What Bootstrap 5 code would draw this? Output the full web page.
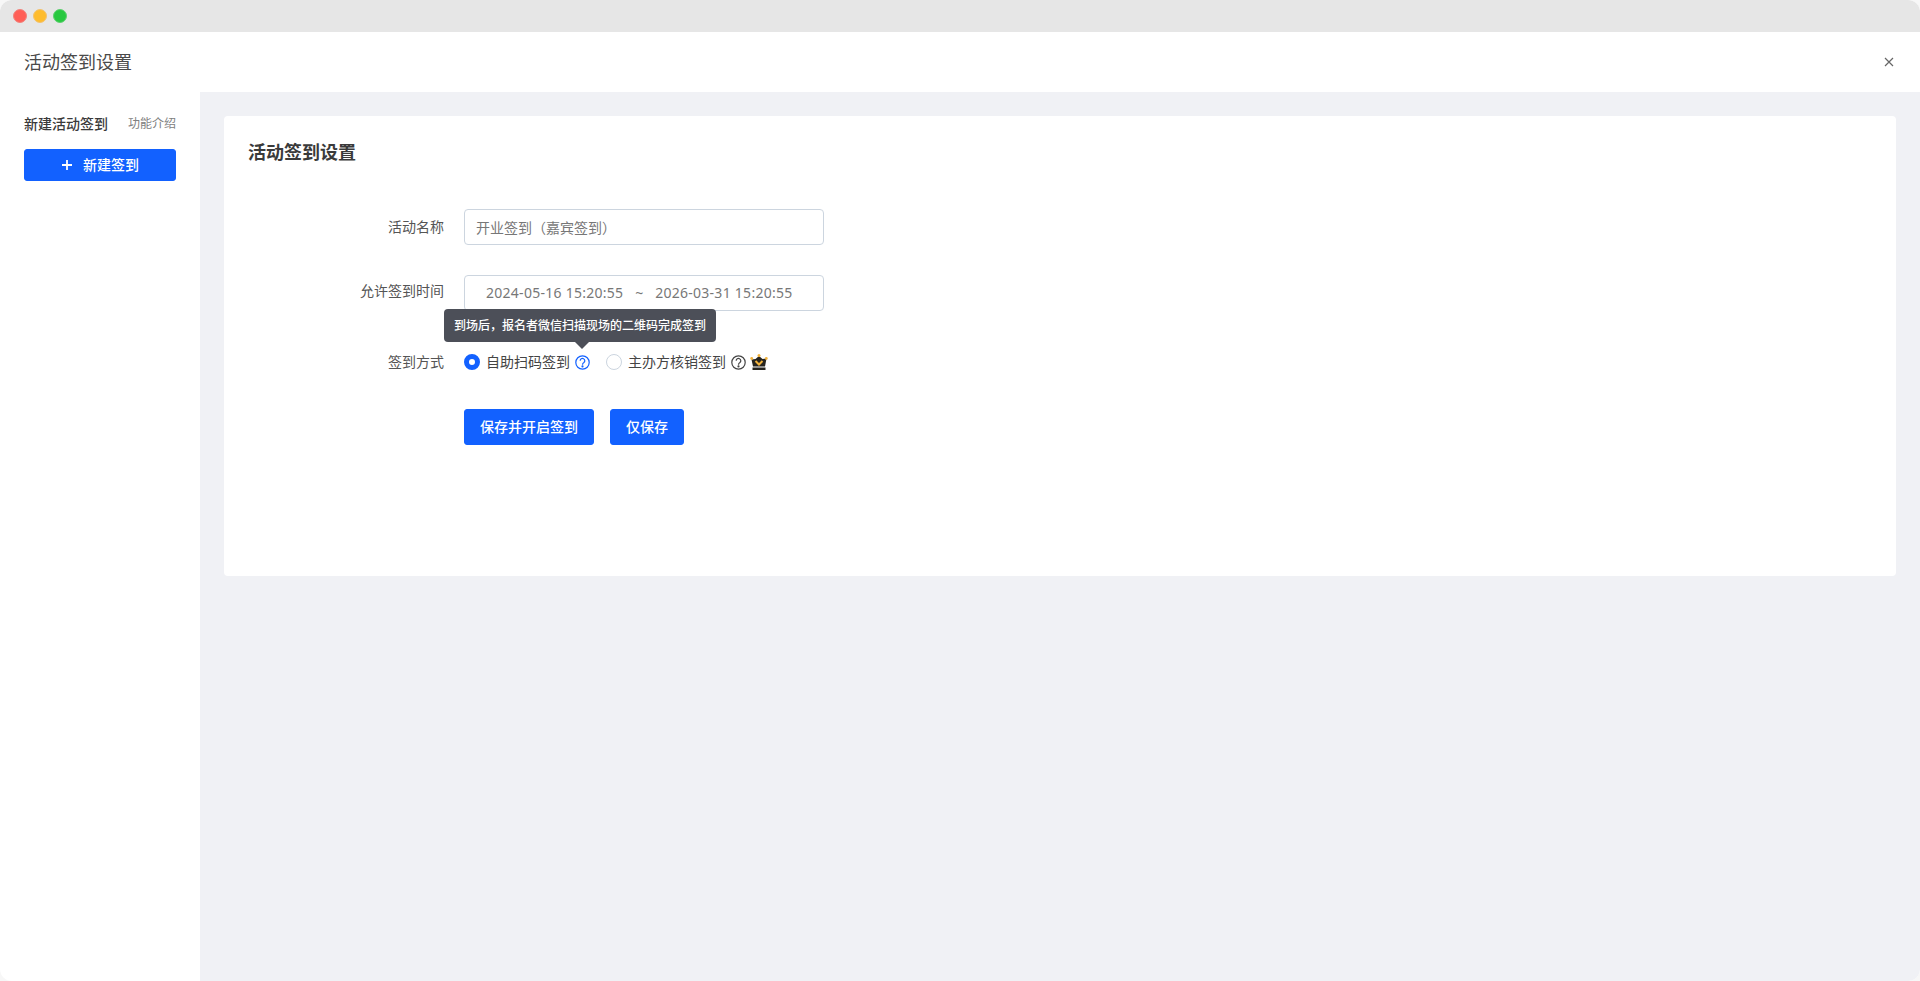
<!DOCTYPE html>
<html lang="zh-CN">
<head>
<meta charset="utf-8">
<title>活动签到设置</title>
<link href="https://cdn.jsdelivr.net/npm/bootstrap@5.3.0/dist/css/bootstrap.min.css" rel="stylesheet">
<style>
html,body{height:100%;}
body{margin:0;background:#f7f7f7;font-family:"Noto Sans","Noto Sans CJK SC",sans-serif;color:#333;font-size:14px;overflow:hidden;}
.win{height:981px;border-radius:12px;overflow:hidden;background:#fff;}
.win-bar{height:32px;background:#e6e6e6;padding-left:13px;gap:6px;}
.dot{width:14px;height:14px;border-radius:50%;}
.dot-r{background:#ff5f57;border:1px solid #f0837d;}
.dot-y{background:#febc2e;border:1px solid #f2c26e;}
.dot-g{background:#28c840;border:1px solid #5fcf70;}
.win-head{height:60px;padding:0 24px;}
.win-title{font-size:18px;line-height:24px;color:#4a4a4a;font-weight:400;margin:0;}
.win-close{width:16px;height:16px;color:#666;margin-right:-1px;}
.win-body{height:889px;}
.side{width:200px;flex:none;padding:22px 24px 24px;}
.side-name{font-size:14px;font-weight:500;line-height:20px;color:#3a3a3a;}
.side-link{font-size:12px;line-height:20px;color:#808080;text-decoration:none;}
.btn-main{--bs-btn-bg:#1261ff;--bs-btn-border-color:#1261ff;--bs-btn-hover-bg:#1261ff;--bs-btn-hover-border-color:#1261ff;--bs-btn-color:#fff;--bs-btn-hover-color:#fff;--bs-btn-font-size:14px;--bs-btn-font-weight:500;--bs-btn-border-radius:3px;--bs-btn-padding-y:0;--bs-btn-padding-x:0;--bs-btn-line-height:20px;}
.btn-new{height:32px;margin-top:15px;gap:10px;}
.main-area{background:#f0f1f5;padding:24px;}
.pane{height:460px;background:#fff;border-radius:4px;padding:24px;}
.pane-title{font-size:18px;font-weight:600;line-height:24px;color:#3a3a3a;margin:0 0 45px;}
.f-row{height:36px;}
.f-label{width:196px;flex:none;text-align:right;margin:0;line-height:20px;color:#555;padding:0;}
.f-label-up{margin-bottom:4px;}
.f-ctl{width:360px;height:36px;margin-left:20px;border:1px solid #ccd5df;border-radius:4px;padding:0 11px;font-size:14px;color:#777;line-height:34px;}
.f-ctl:focus{border-color:#ccd5df;box-shadow:none;color:#777;}
.f-date{padding-left:21px;white-space:pre;letter-spacing:.27px;}
.gap-r{margin-top:30px;}
.gap-m{margin-top:41px;}
.ways{margin-left:20px;height:20px;position:relative;}
.radio-dot{width:16px;height:16px;border-radius:50%;flex:none;background:#fff;border:1px solid #ccd5df;}
.radio-dot.on{border:5px solid #1261ff;}
.way-txt{margin-left:6px;color:#444;line-height:20px;white-space:nowrap;}
.q-ic{width:15px;height:15px;flex:none;margin-left:5px;}
.way-b{margin-left:16px;}
.crown{width:18px;height:18px;flex:none;margin-left:4px;}
.tip{position:absolute;left:-20px;top:-43px;width:272px;height:33px;background:#4c4f58;color:#fff;font-size:12px;font-weight:500;line-height:33px;text-align:center;border-radius:4px;white-space:nowrap;}
.tip::after{content:"";position:absolute;left:131px;top:33px;border:7px solid transparent;border-top-color:#4c4f58;border-bottom:0;}
.acts{margin-left:216px;margin-top:37px;gap:16px;}
.act{height:36px;}
.act-a{width:130px;}
.act-b{width:74px;}
</style>
</head>
<body>
<div class="win d-flex flex-column">
  <div class="win-bar d-flex align-items-center">
    <span class="dot dot-r"></span><span class="dot dot-y"></span><span class="dot dot-g"></span>
  </div>
  <div class="win-head d-flex align-items-center justify-content-between">
    <h1 class="win-title">活动签到设置</h1>
    <svg class="win-close" viewBox="0 0 16 16" fill="none" stroke="currentColor" stroke-width="1.2"><path d="M4 4l8 8M12 4l-8 8"/></svg>
  </div>
  <div class="win-body d-flex">
    <aside class="side">
      <div class="d-flex justify-content-between align-items-center">
        <span class="side-name">新建活动签到</span>
        <a class="side-link" href="#">功能介绍</a>
      </div>
      <button type="button" class="btn btn-main btn-new w-100 d-flex align-items-center justify-content-center">
        <svg width="12" height="12" viewBox="0 0 12 12" stroke="#fff" stroke-width="1.8"><path d="M6 1v10M1 6h10"/></svg>
        <span>新建签到</span>
      </button>
    </aside>
    <main class="main-area flex-grow-1">
      <section class="pane">
        <h2 class="pane-title">活动签到设置</h2>
        <div class="f-row d-flex align-items-center">
          <label class="f-label">活动名称</label>
          <input class="form-control f-ctl" value="开业签到（嘉宾签到）">
        </div>
        <div class="f-row d-flex align-items-center gap-r">
          <label class="f-label f-label-up">允许签到时间</label>
          <div class="form-control f-ctl f-date">2024-05-16 15:20:55   ~   2026-03-31 15:20:55</div>
        </div>
        <div class="d-flex align-items-center gap-m">
          <label class="f-label">签到方式</label>
          <div class="ways d-flex align-items-center">
            <div class="tip">到场后，报名者微信扫描现场的二维码完成签到</div>
            <span class="radio-dot on"></span>
            <span class="way-txt">自助扫码签到</span>
            <svg class="q-ic" viewBox="0 0 15 15" fill="none" stroke="#1261ff" stroke-width="1.2"><circle cx="7.5" cy="7.5" r="6.7"/><path d="M5.2 5.8a2.300 2.300 0 1 1 3.700 1.800c-.9.6-1.400 1-1.400 2.100"/><circle cx="7.5" cy="11.4" r=".5" fill="#1261ff"/></svg>
            <span class="radio-dot way-b"></span>
            <span class="way-txt">主办方核销签到</span>
            <svg class="q-ic" viewBox="0 0 15 15" fill="none" stroke="#444" stroke-width="1.2"><circle cx="7.5" cy="7.5" r="6.7"/><path d="M5.2 5.8a2.300 2.300 0 1 1 3.700 1.800c-.9.6-1.400 1-1.400 2.100"/><circle cx="7.5" cy="11.4" r=".5" fill="#444"/></svg>
            <svg class="crown" viewBox="0 0 18 18"><path d="M1.500 6.500L5.500 6 9 3l3.500 3 4-.5L15 13.500H3z" fill="#26241f"/><path d="M5.500 8L9 11.500 12.500 8" fill="none" stroke="#f2b33d" stroke-width="2"/><circle cx="9" cy="2.500" r="1.500" fill="#f2b33d"/><circle cx="1.700" cy="5.500" r="1.400" fill="#f2b33d"/><circle cx="16.300" cy="5.500" r="1.400" fill="#f2b33d"/><rect x="2.500" y="14.500" width="13" height="2.500" fill="#26241f"/></svg>
          </div>
        </div>
        <div class="acts d-flex">
          <button type="button" class="btn btn-main act act-a">保存并开启签到</button>
          <button type="button" class="btn btn-main act act-b">仅保存</button>
        </div>
      </section>
    </main>
  </div>
</div>
<script src="https://cdn.jsdelivr.net/npm/bootstrap@5.3.0/dist/js/bootstrap.bundle.min.js"></script>
</body>
</html>
